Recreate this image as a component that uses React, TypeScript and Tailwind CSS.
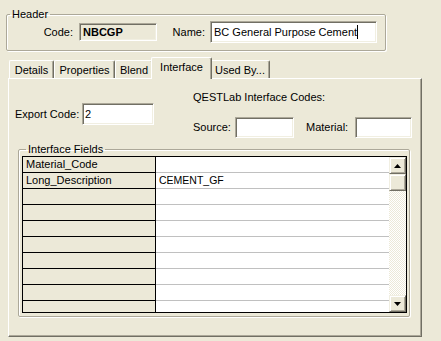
const sunken =
    "border border-t-[#aca899] border-l-[#aca899] border-r-white border-b-white shadow-[inset_1px_1px_0_#716f64,inset_-1px_-1px_0_#f1efe2]"
const raised =
    "border border-t-[#f1efe2] border-l-[#f1efe2] border-r-[#716f64] border-b-[#716f64] shadow-[inset_1px_1px_0_#fff,inset_-1px_-1px_0_#aca899]"

const tabs = [
    { label: "Details", w: "w-[45px]" },
    { label: "Properties", w: "w-[61px]" },
    { label: "Blend", w: "w-[38px]" },
    { label: "Interface", w: "w-[61px]", active: true },
    { label: "Used By...", w: "w-[60px]" },
]

const rows: [string, string][] = [
    ["Material_Code", ""],
    ["Long_Description", "CEMENT_GF"],
    ["", ""],
    ["", ""],
    ["", ""],
    ["", ""],
    ["", ""],
    ["", ""],
    ["", ""],
    ["", ""],
]

function Arrow({ up }: { up?: boolean }) {
    return (
        <svg width="7" height="4" viewBox="0 0 7 4">
            {up ? <path d="M3.5 0 L7 4 L0 4 Z" fill="#000" /> : <path d="M0 0 L7 0 L3.5 4 Z" fill="#000" />}
        </svg>
    )
}

export default function App() {
    return (
        <div className="w-[441px] h-[341px] bg-[#ece9d8] text-[11px] leading-[13px] text-black font-['Liberation_Sans',Arial,sans-serif] pt-[8px] overflow-hidden whitespace-nowrap">
            {/* Header group */}
            <fieldset className="ml-[6px] w-[380px] h-[43px] border border-[#aca899] shadow-[inset_1px_1px_0_#fff,1px_1px_0_#fff] rounded-[2px]">
                <legend className="ml-[3px] px-[2px]">Header</legend>
                <div className="flex items-center h-[22px]">
                    <span className="w-[66px] text-right">Code:</span>
                    <div className={`ml-[6px] w-[78px] h-[18px] flex items-center px-[3px] font-bold bg-[#ece9d8] ${sunken}`}>
                        NBCGP
                    </div>
                    <span className="w-[48px] text-right">Name:</span>
                    <div className={`ml-[5px] w-[167px] h-[22px] flex items-center px-[3px] bg-white ${sunken}`}>
                        BC General Purpose Cement
                        <span className="w-px h-[14px] bg-black" />
                    </div>
                </div>
            </fieldset>

            {/* Tabs */}
            <div className="mt-[6px] ml-[9px] h-[21px] flex items-end">
                {tabs.map(t =>
                    t.active ? (
                        <div
                            key={t.label}
                            className={`${t.w} -mx-[2px] -mb-px h-[22px] relative z-10 bg-[#ece9d8] flex justify-center pt-[3px] border-t border-l border-white border-r border-r-[#716f64] shadow-[inset_-1px_0_0_#aca899] rounded-t-[2px]`}
                        >
                            {t.label}
                        </div>
                    ) : (
                        <div
                            key={t.label}
                            className={`${t.w} h-[18px] flex justify-center pt-[3px] border-t border-l border-white border-r border-r-[#716f64] shadow-[inset_-1px_0_0_#aca899] rounded-t-[2px]`}
                        >
                            {t.label}
                        </div>
                    )
                )}
            </div>

            {/* Tab panel */}
            <div className="ml-[8px] w-[414px] h-[259px] border border-t-white border-l-white border-r-[#716f64] border-b-[#716f64] shadow-[inset_-1px_-1px_0_#aca899]">
                <div className="flex">
                    <div className="w-[184px] pl-[6px] pt-[11px] flex items-center">
                        <span className="w-[63px]">Export Code:</span>
                        <div className={`ml-[4px] w-[72px] h-[22px] flex items-center px-[2px] bg-white ${sunken}`}>2</div>
                    </div>
                    <div className="pt-[12px]">
                        <div>QESTLab Interface Codes:</div>
                        <div className="mt-[13px] flex items-center h-[21px]">
                            <span className="w-[38px]">Source:</span>
                            <div className={`ml-[4px] w-[59px] h-[21px] bg-white ${sunken}`} />
                            <span className="ml-[12px] w-[45px]">Material:</span>
                            <div className={`ml-[4px] w-[57px] h-[21px] bg-white ${sunken}`} />
                        </div>
                    </div>
                </div>

                {/* Interface Fields group */}
                <fieldset className="ml-[9px] mt-[5px] w-[392px] h-[174px] border border-[#aca899] shadow-[inset_1px_1px_0_#fff,1px_1px_0_#fff] rounded-[2px] pl-[3px]">
                    <legend className="ml-[4px] px-[2px]">Interface Fields</legend>
                    <div className="w-[385px] h-[157px] border border-black flex overflow-hidden">
                        <div className="w-[133px] border-r border-black">
                            {rows.map((r, i) => (
                                <div key={i} className="h-[16px] border-b border-black bg-[#ece9d8] px-[3px] flex items-center">
                                    {r[0]}
                                </div>
                            ))}
                        </div>
                        <div className="flex-1 bg-white">
                            {rows.map((r, i) => (
                                <div key={i} className="h-[16px] border-b border-[#c0c0c0] px-[3px] flex items-center text-[10.5px]">
                                    {r[1]}
                                </div>
                            ))}
                        </div>
                        <div className="w-[17px] flex flex-col bg-[repeating-conic-gradient(#fff_0_25%,#ece9d8_0_50%)] bg-[length:2px_2px]">
                            <div className={`h-[17px] bg-[#ece9d8] flex items-center justify-center ${raised}`}>
                                <Arrow up />
                            </div>
                            <div className={`h-[17px] bg-[#ece9d8] ${raised}`} />
                            <div className="flex-1" />
                            <div className={`h-[17px] bg-[#ece9d8] flex items-center justify-center ${raised}`}>
                                <Arrow />
                            </div>
                        </div>
                    </div>
                </fieldset>
            </div>
        </div>
    )
}
